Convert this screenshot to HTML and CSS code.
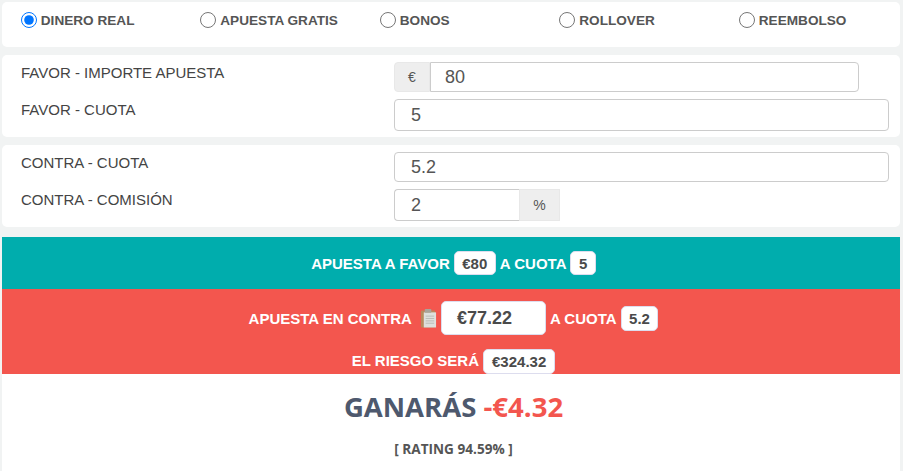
FILE: index.html
```html
<!DOCTYPE html>
<html lang="es">

<head>
    <meta charset="UTF-8">
    <meta name="viewport" content="width=device-width, initial-scale=1.0">
    <title>Calculadora</title>
    <link rel="stylesheet" href="styles.css">
</head>

<body>
    <div class="card tipo">
        <label class="radio"><input type="radio" name="tipo" checked><span>DINERO REAL</span></label>
        <label class="radio"><input type="radio" name="tipo"><span>APUESTA GRATIS</span></label>
        <label class="radio"><input type="radio" name="tipo"><span>BONOS</span></label>
        <label class="radio"><input type="radio" name="tipo"><span>ROLLOVER</span></label>
        <label class="radio"><input type="radio" name="tipo"><span>REEMBOLSO</span></label>
    </div>

    <div class="card form">
        <div class="row">
            <label class="name">FAVOR - IMPORTE APUESTA</label>
            <div class="group short">
                <span class="addon left">€</span>
                <input class="field joined-left" type="text" value="80">
            </div>
        </div>
        <div class="row tall">
            <label class="name">FAVOR - CUOTA</label>
            <input class="field" type="text" value="5">
        </div>
    </div>

    <div class="card form">
        <div class="row">
            <label class="name">CONTRA - CUOTA</label>
            <input class="field" type="text" value="5.2">
        </div>
        <div class="row tall">
            <label class="name">CONTRA - COMISIÓN</label>
            <div class="group percent">
                <input class="field joined-right" type="text" value="2">
                <span class="addon right">%</span>
            </div>
        </div>
    </div>

    <div class="band favor">
        <span>APUESTA A FAVOR</span>
        <b class="pill">€80</b>
        <span>A CUOTA</span>
        <b class="pill">5</b>
    </div>

    <div class="band contra">
        <div class="line">
            <span>APUESTA EN CONTRA</span>
            <svg class="clip" width="17" height="21" viewBox="0 0 18 21">
                <rect x="1" y="2" width="15" height="18" rx="1" fill="#b98a5c" />
                <rect x="4" y="4" width="13" height="16" fill="#dfe0dc" />
                <path d="M6 8h9M6 10.500h9M6 13h9M6 15.500h9" stroke="#b9bbb6" stroke-width="1" />
                <rect x="5" y="0.500" width="7" height="4" rx="1" fill="#a9a49a" />
            </svg>
            <b class="pill big">€77.22</b>
            <span>A CUOTA</span>
            <b class="pill mid">5.2</b>
        </div>
        <div class="line riesgo">
            <span>EL RIESGO SERÁ</span>
            <b class="pill risk">€324.32</b>
        </div>
    </div>

    <div class="result">
        <h2>GANARÁS <span class="neg">-€4.32</span></h2>
        <p>[ RATING 94.59% ]</p>
    </div>
</body>

</html>
```

FILE: styles.css
```css
* {
    padding: 0;
    margin: 0;
    box-sizing: border-box;
}

body {
    background-color: #f1f3f3;
    font-family: "Liberation Sans", Arial, sans-serif;
    color: #555;
    height: 471px;
    overflow: hidden;
    padding: 2px 3px 0 2px;
}

.card {
    margin-bottom: 8px;
    background-color: #fff;
    border-radius: 5px;
}

/* radios */
.tipo {
    display: flex;
    height: 45px;
    padding: 9px 0 0 18.800px;
}

.radio {
    flex: none;
    width: 179.500px;
    height: 18px;
    display: flex;
    align-items: center;
    font-size: 13.600px;
    font-weight: bold;
}

.radio input {
    width: 16px;
    height: 16px;
    margin-right: 4px;
}

/* filas */
.form {
    height: 82px;
    padding: 7px 11px 0 19px;
}

.row {
    display: flex;
    height: 30px;
    margin-bottom: 7px;
}

.row.tall {
    height: 32px;
    margin-bottom: 0;
}

.name {
    width: 373px;
    flex-shrink: 0;
    font-size: 15px;
    line-height: 22px;
    color: #444;
}

.field {
    flex: 1;
    min-width: 0;
    height: 100%;
    padding: 0 16px;
    border: 1px solid #ccc;
    border-radius: 4px;
    font-family: "Liberation Sans", Arial, sans-serif;
    font-size: 18px;
    color: #555;
    background-color: #fff;
}

.group {
    display: flex;
    flex: 1;
}

.group.short {
    padding-right: 30px;
}

.group.percent {
    flex: none;
    width: 166px;
}

.addon {
    display: flex;
    align-items: center;
    justify-content: center;
    flex-shrink: 0;
    background-color: #eee;
    border: 1px solid #e8e8e8;
    font-size: 14px;
    color: #555;
}

.addon.left {
    width: 36px;
    border-radius: 4px 0 0 4px;
}

.addon.right {
    width: 41px;
}

.joined-left {
    padding-left: 14px;
    border-radius: 0 4px 4px 0;
}

.joined-right {
    border-radius: 4px 0 0 4px;
    border-right: none;
}

/* bandas */
.band {
    color: #fff;
    font-size: 15px;
    font-weight: bold;
}

.favor {
    margin-top: 10px;
    height: 52px;
    padding-left: 5px;
    background-color: #00adad;
    display: flex;
    align-items: center;
    justify-content: center;
    gap: 4px;
}

.contra {
    height: 85px;
    background-color: #f3564e;
    padding: 12px 0 0 5px;
}

.line {
    display: flex;
    align-items: center;
    justify-content: center;
    height: 34px;
    gap: 4px;
}

.riesgo {
    height: 25px;
    margin-top: 14px;
}

.riesgo span {
    margin-top: -2px;
}

.pill {
    display: inline-flex;
    align-items: center;
    justify-content: center;
    height: 24px;
    padding: 0 7.500px;
    background-color: #fff;
    border: 1px solid #dde;
    border-radius: 5px;
    color: #4a4a4a;
    font-size: 15px;
}

.pill.big {
    width: 105px;
    height: 34px;
    justify-content: flex-start;
    padding-left: 15px;
    font-size: 18px;
}

.pill.mid {
    height: 25px;
}

.pill.risk {
    height: 25px;
    padding: 0 8px;
}

.clip {
    margin-left: 4px;
}

/* resultado */
.result {
    height: 97px;
    padding-left: 5px;
    background-color: #fff;
    text-align: center;
    font-family: "Open Sans", sans-serif;
    font-weight: bold;
}

.result h2 {
    padding-top: 12px;
    font-size: 27.500px;
    line-height: 42px;
    color: #4e596e;
}

.neg {
    color: #f3564e;
}

.result p {
    margin-top: 12px;
    font-size: 13.600px;
    line-height: 18px;
    color: #555;
}
```
